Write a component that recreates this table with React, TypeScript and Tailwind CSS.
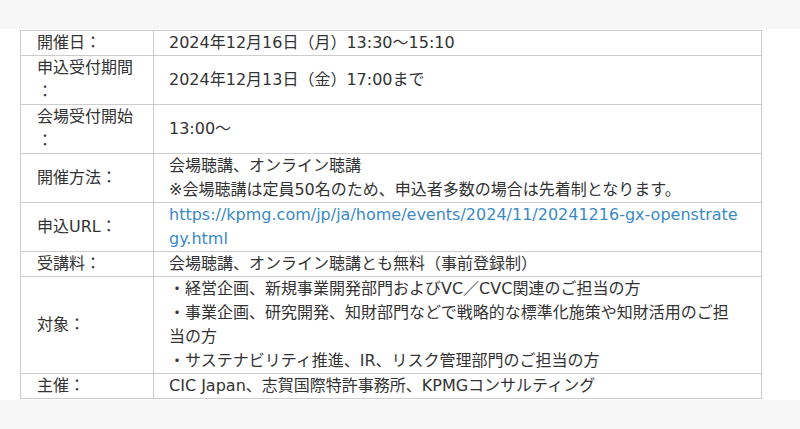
const rows: { label: string; lines: string[]; link?: boolean }[] = [
  { label: "開催日：", lines: ["2024年12月16日（月）13:30〜15:10"] },
  { label: "申込受付期間：", lines: ["2024年12月13日（金）17:00まで"] },
  { label: "会場受付開始：", lines: ["13:00〜"] },
  {
    label: "開催方法：",
    lines: ["会場聴講、オンライン聴講", "※会場聴講は定員50名のため、申込者多数の場合は先着制となります。"],
  },
  {
    label: "申込URL：",
    lines: ["https://kpmg.com/jp/ja/home/events/2024/11/20241216-gx-openstrategy.html"],
    link: true,
  },
  { label: "受講料：", lines: ["会場聴講、オンライン聴講とも無料（事前登録制）"] },
  {
    label: "対象：",
    lines: [
      "・経営企画、新規事業開発部門およびVC／CVC関連のご担当の方",
      "・事業企画、研究開発、知財部門などで戦略的な標準化施策や知財活用のご担当の方",
      "・サステナビリティ推進、IR、リスク管理部門のご担当の方",
    ],
  },
  { label: "主催：", lines: ["CIC Japan、志賀国際特許事務所、KPMGコンサルティング"] },
];

export default function App() {
  return (
    <div
      className="w-[800px] h-[429px] bg-[#f7f7f7] pt-[29px] text-[16px] leading-[24px] text-[#333333]"
      style={{ fontFamily: '"DejaVu Sans", "Noto Sans CJK JP", sans-serif' }}
    >
      <div className="bg-white pl-[20px] pr-[38px] pt-px pb-px">
        <table className="w-[742px] border-collapse table-fixed">
          <colgroup>
            <col className="w-[133px]" />
            <col />
          </colgroup>
          <tbody>
            {rows.map((row) => (
              <tr key={row.label}>
                <td className="border border-[#cccccc] px-[16px] align-middle [line-break:anywhere]">
                  {row.label}
                </td>
                <td className="border border-[#cccccc] pl-[15px] pr-[18px] align-middle">
                  {row.lines.map((line) =>
                    row.link ? (
                      <a key={line} href="#" className="block text-[#3b8ac4] break-all">
                        {line}
                      </a>
                    ) : (
                      <div key={line}>{line}</div>
                    ),
                  )}
                </td>
              </tr>
            ))}
          </tbody>
        </table>
      </div>
    </div>
  );
}
